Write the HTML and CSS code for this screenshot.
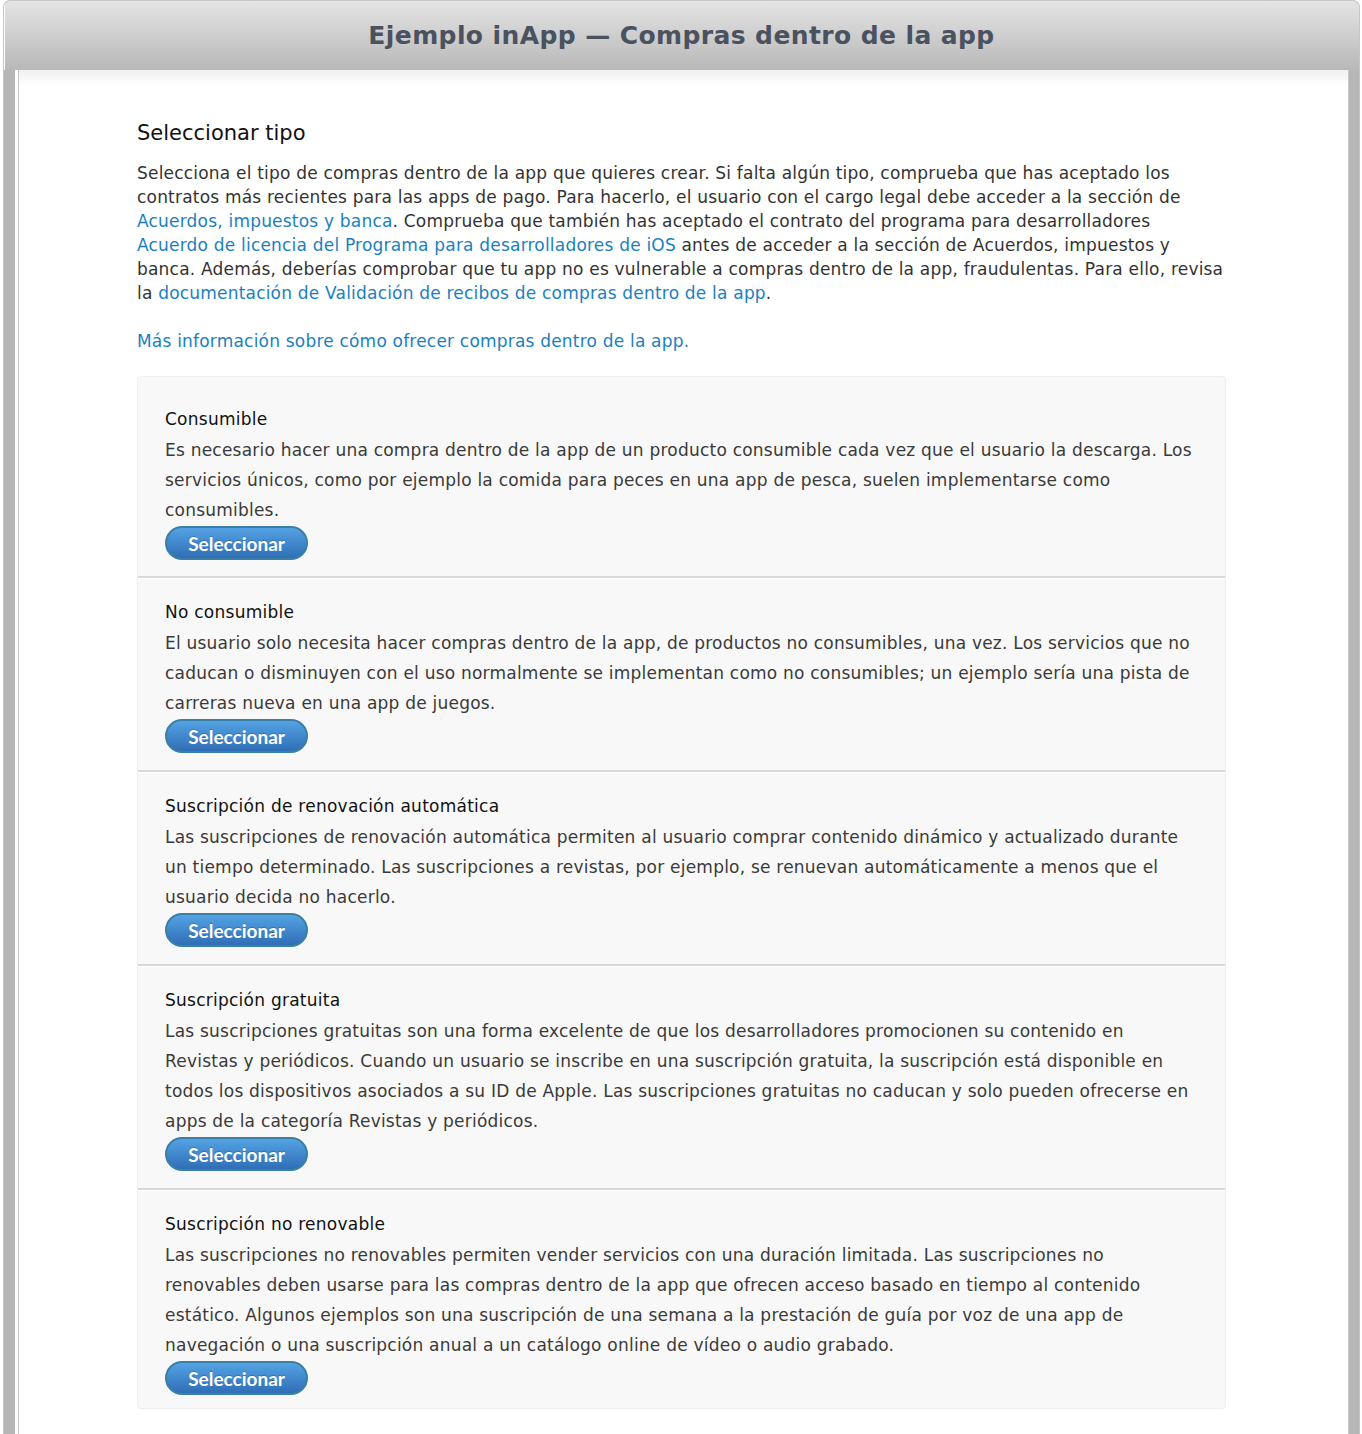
FILE: index.html
```html
<!DOCTYPE html>
<html lang="es">
<head>
<meta charset="utf-8">
<title>Ejemplo inApp — Compras dentro de la app</title>
<link rel="stylesheet" href="styles.css">
</head>
<body>
<div class="frame">
  <header class="titlebar">
    <h1>Ejemplo inApp — Compras dentro de la app</h1>
  </header>
  <div class="content">
    <div class="inner">
      <main class="column">
        <h2 class="heading">Seleccionar tipo</h2>
        <p class="intro">Selecciona el tipo de compras dentro de la app que quieres crear. Si falta algún tipo, comprueba que has aceptado los contratos más recientes para las apps de pago. Para hacerlo, el usuario con el cargo legal debe acceder a la sección de <a href="#">Acuerdos, impuestos y banca</a>. Comprueba que también has aceptado el contrato del programa para desarrolladores <a href="#">Acuerdo de licencia del Programa para desarrolladores de iOS</a> antes de acceder a la sección de Acuerdos, impuestos y banca. Además, deberías comprobar que tu app no es vulnerable a compras dentro de la app, fraudulentas. Para ello, revisa la <a href="#">documentación de Validación de recibos de compras dentro de la app</a>.</p>
        <p class="more"><a href="#">Más información sobre cómo ofrecer compras dentro de la app.</a></p>

        <div class="panel">
          <section class="type">
            <h3>Consumible</h3>
            <p>Es necesario hacer una compra dentro de la app de un producto consumible cada vez que el usuario la descarga. Los servicios únicos, como por ejemplo la comida para peces en una app de pesca, suelen implementarse como consumibles.</p>
            <button class="btn" type="button">Seleccionar</button>
          </section>
          <section class="type">
            <h3>No consumible</h3>
            <p>El usuario solo necesita hacer compras dentro de la app, de productos no consumibles, una vez. Los servicios que no caducan o disminuyen con el uso normalmente se implementan como no consumibles; un ejemplo sería una pista de carreras nueva en una app de juegos.</p>
            <button class="btn" type="button">Seleccionar</button>
          </section>
          <section class="type">
            <h3>Suscripción de renovación automática</h3>
            <p>Las suscripciones de renovación automática permiten al usuario comprar contenido dinámico y actualizado durante un tiempo determinado. Las suscripciones a revistas, por ejemplo, se renuevan automáticamente a menos que el usuario decida no hacerlo.</p>
            <button class="btn" type="button">Seleccionar</button>
          </section>
          <section class="type">
            <h3>Suscripción gratuita</h3>
            <p>Las suscripciones gratuitas son una forma excelente de que los desarrolladores promocionen su contenido en Revistas y periódicos. Cuando un usuario se inscribe en una suscripción gratuita, la suscripción está disponible en todos los dispositivos asociados a su ID de Apple. Las suscripciones gratuitas no caducan y solo pueden ofrecerse en apps de la categoría Revistas y periódicos.</p>
            <button class="btn" type="button">Seleccionar</button>
          </section>
          <section class="type">
            <h3>Suscripción no renovable</h3>
            <p>Las suscripciones no renovables permiten vender servicios con una duración limitada. Las suscripciones no renovables deben usarse para las compras dentro de la app que ofrecen acceso basado en tiempo al contenido estático. Algunos ejemplos son una suscripción de una semana a la prestación de guía por voz de una app de navegación o una suscripción anual a un catálogo online de vídeo o audio grabado.</p>
            <button class="btn" type="button">Seleccionar</button>
          </section>
        </div>
      </main>
    </div>
  </div>
</div>
</body>
</html>
```
FILE: styles.css
```css
html, body {
  margin: 0;
  padding: 0;
  background: #ffffff;
}

body {
  font-family: "DejaVu Sans", "Noto Sans", sans-serif;
  color: #333333;
  height: 1434px;
  overflow: hidden;
}

.frame {
  margin-left: 3px;
  width: 1355px;
  min-height: 1434px;
  border: 1px solid #c6c6c6;
  border-bottom: none;
  border-radius: 7px 7px 0 0;
  background: #b6b6b6;
  display: flex;
  flex-direction: column;
}

.titlebar {
  height: 69px;
  background: linear-gradient(#e4e4e4, #b8b8b8);
  border-radius: 6px 6px 0 0;
  box-shadow: inset 9px 0 0 -8px #ffffff;
  display: flex;
  align-items: center;
  justify-content: center;
}

.titlebar h1 {
  margin: 0;
  font-family: "DejaVu Sans", sans-serif;
  font-weight: bold;
  font-size: 25px;
  color: #4a5260;
  letter-spacing: 0.4px;
}

.content {
  flex: 1;
  margin: 0 10px 0 11px;
  background: #ffffff;
  padding-left: 3px;
  display: flex;
}

.inner {
  flex: 1;
  border-left: 1px solid #c4c4c4;
  border-right: 1px solid #c9c9c9;
  background: linear-gradient(#f0f0f0, #ffffff 16px);
  padding: 49px 122px 0 118px;
}

.column {
  display: flex;
  flex-direction: column;
}

.heading {
  margin: 0;
  font-size: 21px;
  line-height: 28px;
  font-weight: normal;
  color: #111111;
}

.intro, .more {
  margin: 14px 0 0;
  font-size: 17px;
  line-height: 24px;
  letter-spacing: 0.2px;
}

.more {
  margin-top: 24px;
}

a {
  color: #1a7fc1;
  text-decoration: none;
}

.panel {
  margin-top: 23px;
  background: #f8f8f8;
  border: 1px solid #efefef;
  border-radius: 4px;
  padding-top: 9px;
}

.type {
  padding: 22px 30px 17px 27px;
  border-top: 2px solid #d6dadd;
  box-shadow: inset 0 1px 0 #ffffff;
}

.type:first-child {
  padding-top: 21px;
  padding-bottom: 16px;
  border-top: none;
  box-shadow: none;
}

.type:last-child {
  padding-bottom: 13px;
}

.type h3 {
  margin: 0;
  font-size: 17px;
  line-height: 24px;
  font-weight: normal;
  color: #111111;
  letter-spacing: 0.25px;
}

.type p {
  margin: 4px 0 0;
  font-size: 17px;
  line-height: 30px;
  color: #3a3a3a;
  letter-spacing: 0.22px;
}

.btn {
  margin-top: 1px;
  width: 143px;
  height: 34px;
  border: 2px solid #3a80a6;
  border-radius: 17px;
  background: linear-gradient(#54a2e4, #2f6eb5);
  color: #ffffff;
  font-family: Lato, "Open Sans", sans-serif;
  font-weight: bold;
  font-size: 19px;
  text-shadow: 0 -1px 0 rgba(0, 0, 0, 0.2);
  padding: 0;
  display: block;
}
```
